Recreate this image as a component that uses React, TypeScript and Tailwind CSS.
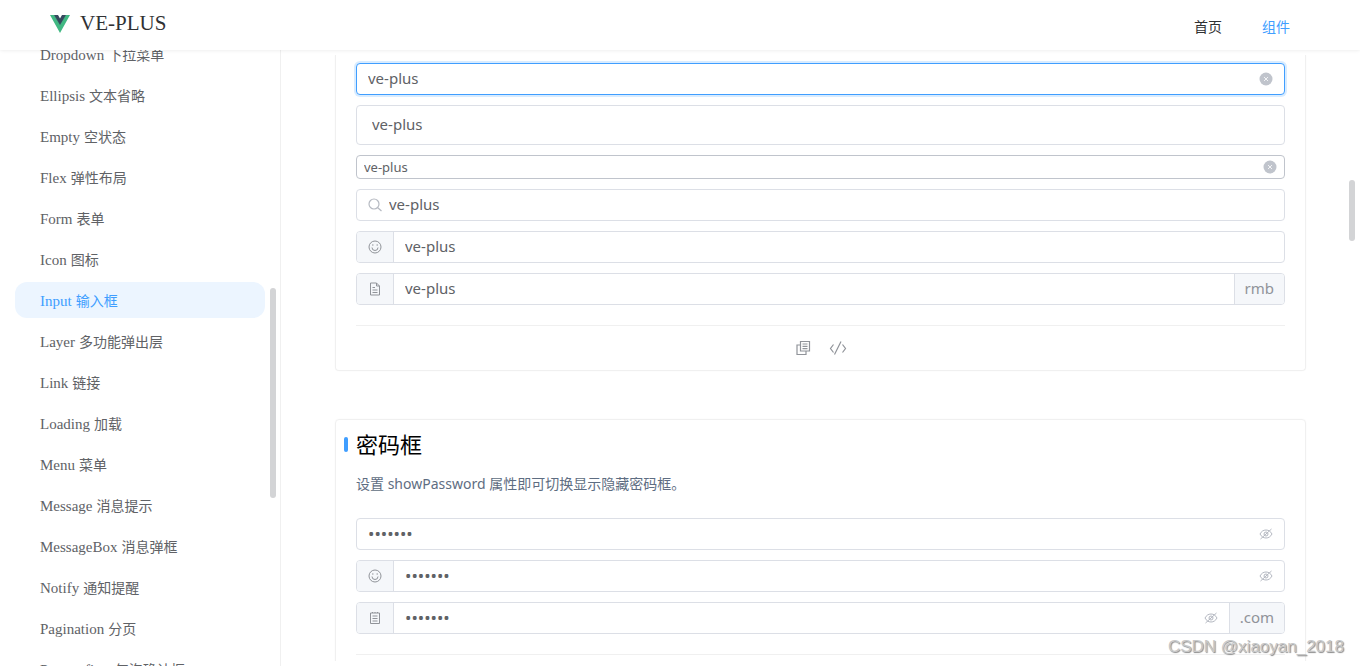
import { useState } from 'react';
import type { ReactNode } from 'react';
import clsx from 'clsx';

const menu = [
  { name: 'Dropdown', label: '下拉菜单' },
  { name: 'Ellipsis', label: '文本省略' },
  { name: 'Empty', label: '空状态' },
  { name: 'Flex', label: '弹性布局' },
  { name: 'Form', label: '表单' },
  { name: 'Icon', label: '图标' },
  { name: 'Input', label: '输入框' },
  { name: 'Layer', label: '多功能弹出层' },
  { name: 'Link', label: '链接' },
  { name: 'Loading', label: '加载' },
  { name: 'Menu', label: '菜单' },
  { name: 'Message', label: '消息提示' },
  { name: 'MessageBox', label: '消息弹框' },
  { name: 'Notify', label: '通知提醒' },
  { name: 'Pagination', label: '分页' },
  { name: 'Popconfirm', label: '气泡确认框' },
];

function Logo() {
  return (
    <svg className="w-5 h-[18px]" viewBox="0 0 20 18" aria-hidden="true">
      <path d="M0 0h4.5L10 9l5.5-9H20L10 18z" fill="#41b883" />
      <path d="M4 0h4l2 3.500L12 0h4l-6 10z" fill="#35495e" />
    </svg>
  );
}

function ClearIcon() {
  return (
    <svg className="w-3.5 h-3.5" viewBox="0 0 14 14" aria-hidden="true">
      <circle cx="7" cy="7" r="6.5" fill="#c0c4cc" />
      <path d="M5 5l4 4M9 5l-4 4" stroke="#fff" strokeWidth="0.8" />
    </svg>
  );
}

function SearchIcon() {
  return (
    <svg className="w-3.5 h-3.5" viewBox="0 0 14 14" fill="none" stroke="#b6bac2" strokeWidth="1.2" aria-hidden="true">
      <circle cx="6" cy="6" r="5" />
      <path d="M9.5 9.5l4 3.5" />
    </svg>
  );
}

function SmileIcon() {
  return (
    <svg className="w-3.5 h-3.5" viewBox="0 0 14 14" fill="none" stroke="#909399" aria-hidden="true">
      <circle cx="7" cy="7" r="6" />
      <path d="M4 7.5a3 3 0 0 0 6 0" />
      <path d="M4 5h1.5M8.5 5H10" />
    </svg>
  );
}

function DocumentIcon() {
  return (
    <svg className="w-3.5 h-3.5" viewBox="0 0 14 14" fill="none" stroke="#909399" aria-hidden="true">
      <path d="M2.5 1h6l3 3v9h-9z" />
      <path d="M8.5 1v3h3M4.5 5.5H7M4.5 8h5M4.5 10.5h5" />
    </svg>
  );
}

function NotepadIcon() {
  return (
    <svg className="w-3.5 h-3.5" viewBox="0 0 14 14" fill="none" stroke="#909399" aria-hidden="true">
      <path d="M2.5 2h9v10.5h-9z" />
      <path d="M4.5 1v1M7 1v1M9.5 1v1M4.5 5h5M4.5 7.5h5M4.5 10h5" />
    </svg>
  );
}

function EyeOffIcon() {
  return (
    <svg className="w-3.5 h-3.5" viewBox="0 0 14 14" fill="none" stroke="#b3b7c0" aria-hidden="true">
      <path d="M1 7c1.400-2.600 3.400-4 6-4s4.600 1.400 6 4c-1.400 2.600-3.400 4-6 4S2.400 9.600 1 7z" />
      <circle cx="7" cy="7" r="2" />
      <path d="M1.5 12l11-10" />
    </svg>
  );
}

function CopyIcon() {
  return (
    <svg className="w-4 h-4" viewBox="0 0 16 16" fill="none" stroke="#909399" strokeWidth="1.2" aria-hidden="true">
      <path d="M5.5 1.5h9V11h-9z" />
      <path d="M5.5 5H2v9.5h9V11M7.5 4h5M7.5 6.3h5M7.5 8.6h5" />
    </svg>
  );
}

function CodeIcon() {
  return (
    <svg className="w-[18px] h-4" viewBox="0 0 18 16" fill="none" stroke="#909399" strokeWidth="1.2" aria-hidden="true">
      <path d="M4.5 4.5l-3 4 3 4M13.5 4.5l3 4-3 4M12 1.5l-6.5 13" />
    </svg>
  );
}

interface FieldProps {
  label: string;
  size?: 'large' | 'default' | 'small';
  state?: 'focus' | 'hover';
  password?: boolean;
  clearable?: boolean;
  prefix?: ReactNode;
  prepend?: ReactNode;
  append?: ReactNode;
}

function Field({ label, size = 'default', state, password, clearable, prefix, prepend, append }: FieldProps) {
  const [value, setValue] = useState('ve-plus');
  const [visible, setVisible] = useState(false);
  const masked = password && !visible;

  return (
    <div
      className={clsx(
        'flex w-full overflow-hidden rounded border bg-white text-[#606266]',
        size === 'large' && 'h-10 text-[15px]',
        size === 'default' && 'h-8 text-[15px]',
        size === 'small' && 'h-6 text-[13px]',
        state === 'focus' && 'border-[#409eff] shadow-[0_0_0_2px_rgba(64,158,255,0.2)]',
        state === 'hover' && 'border-[#c0c4cc]',
        !state && 'border-[#dcdfe6]'
      )}
    >
      {prepend && (
        <span className="flex w-[37px] shrink-0 items-center justify-center border-r border-[#dcdfe6] bg-[#f5f7fa]">
          {prepend}
        </span>
      )}
      <div
        className={clsx(
          'flex min-w-0 flex-1 items-center',
          size === 'large' && 'px-[15px]',
          size === 'default' && 'px-[11px]',
          size === 'small' && 'px-[7px]'
        )}
      >
        {prefix && <span className="mr-[7px]">{prefix}</span>}
        <input
          type={masked ? 'password' : 'text'}
          aria-label={label}
          value={value}
          onChange={e => setValue(e.target.value)}
          className={clsx(
            'h-full min-w-0 flex-1 bg-transparent outline-none',
            masked && 'text-[17px]',
            size !== 'small' && 'pb-0.5'
          )}
        />
        {clearable && (
          <button type="button" aria-label="清空" onClick={() => setValue('')}>
            <ClearIcon />
          </button>
        )}
        {password && (
          <button type="button" aria-label="显示密码" onClick={() => setVisible(!visible)}>
            <EyeOffIcon />
          </button>
        )}
      </div>
      {append && (
        <span className="flex shrink-0 items-center border-l border-[#dcdfe6] bg-[#f5f7fa] px-[10px] pb-0.5 text-[#909399]">
          {append}
        </span>
      )}
    </div>
  );
}

export default function App() {
  return (
    <div className="relative flex h-screen flex-col overflow-hidden bg-white font-['Noto_Sans','Noto_Sans_CJK_SC',sans-serif]">
      {/* Header */}
      <header className="relative z-10 flex h-[50px] shrink-0 items-center justify-between bg-white pl-[50px] pr-[70px] shadow-[0_0_4px_rgba(0,0,0,0.1)]">
        <a href="#" className="flex items-center gap-2.5 pb-0.5 font-['Liberation_Serif',serif] text-[21px] text-[#303133]">
          <Logo />
          VE-PLUS
        </a>
        <nav className="flex gap-10 pt-0.5 text-[14px]">
          <a href="#" className="text-[#303133]">首页</a>
          <a href="#" className="text-[#409eff]">组件</a>
        </nav>
      </header>

      <div className="flex min-h-0 flex-1">
        {/* Sidebar */}
        <aside className="relative w-[281px] shrink-0 overflow-hidden border-r border-[#f0f0f0] px-[15px]">
          <ul className="-mt-[14px] flex flex-col gap-[5px]">
            {menu.map(item => (
              <li key={item.name}>
                <a
                  href="#"
                  className={clsx(
                    'flex h-9 items-center gap-1 rounded-xl px-[25px] whitespace-nowrap',
                    item.name === 'Input' ? 'bg-[#ecf5ff] text-[#409eff]' : 'text-[#606266]'
                  )}
                >
                  <span className="pt-0.5 font-['Liberation_Serif',serif] text-[15px]">{item.name}</span>
                  <span className="text-[14px]">{item.label}</span>
                </a>
              </li>
            ))}
          </ul>
          <div className="absolute top-[238px] right-1 h-[210px] w-1.5 rounded-full bg-[#d3d4d6]" />
        </aside>

        {/* Content */}
        <main className="relative min-w-0 flex-1 py-[5px]">
          <div className="h-full overflow-hidden px-[54px]">
            <section className="rounded-b border-x border-b border-[#f0f0f0] px-5 pt-2 shadow-[0_0_2px_rgba(0,0,0,0.03)]">
              <div className="flex flex-col gap-2.5">
                <Field label="可清空" state="focus" clearable />
                <Field label="大尺寸" size="large" />
                <Field label="小尺寸" size="small" state="hover" clearable />
                <Field label="搜索" prefix={<SearchIcon />} />
                <Field label="前置图标" prepend={<SmileIcon />} />
                <Field label="金额" prepend={<DocumentIcon />} append="rmb" />
              </div>
              <div className="mt-5 flex h-[45px] items-center justify-center gap-[18px] border-t border-[#f0f0f0]">
                <button type="button" aria-label="复制代码">
                  <CopyIcon />
                </button>
                <button type="button" aria-label="查看代码">
                  <CodeIcon />
                </button>
              </div>
            </section>

            <section className="mt-12 rounded border border-[#f0f0f0] px-5 pt-1.5 pb-5 shadow-[0_0_2px_rgba(0,0,0,0.03)]">
              <h2 className="-ml-3 flex items-center gap-2 text-[22px] leading-9 text-black">
                <span className="h-[15px] w-1 rounded-sm bg-[#409eff]" />
                密码框
              </h2>
              <p className="mt-2.5 text-[14px] leading-6 text-[#5e6d82]">
                设置 showPassword 属性即可切换显示隐藏密码框。
              </p>
              <div className="mt-[22px] flex flex-col gap-2.5">
                <Field label="密码" password />
                <Field label="带图标的密码" password prepend={<SmileIcon />} />
                <Field label="带后缀的密码" password prepend={<NotepadIcon />} append=".com" />
              </div>
              <div className="mt-5 h-[45px] border-t border-[#f0f0f0]" />
            </section>
          </div>
          <div className="absolute top-[130px] right-[5px] h-[61px] w-1.5 rounded-full bg-[#d3d4d6]" />
        </main>
      </div>

      <div className="absolute right-4 bottom-[7px] z-20 font-['Liberation_Sans',sans-serif] text-[17px] leading-6 text-[#c8c8c8] [text-shadow:1px_1px_1px_#888]">
        CSDN @xiaoyan_2018
      </div>
    </div>
  );
}
